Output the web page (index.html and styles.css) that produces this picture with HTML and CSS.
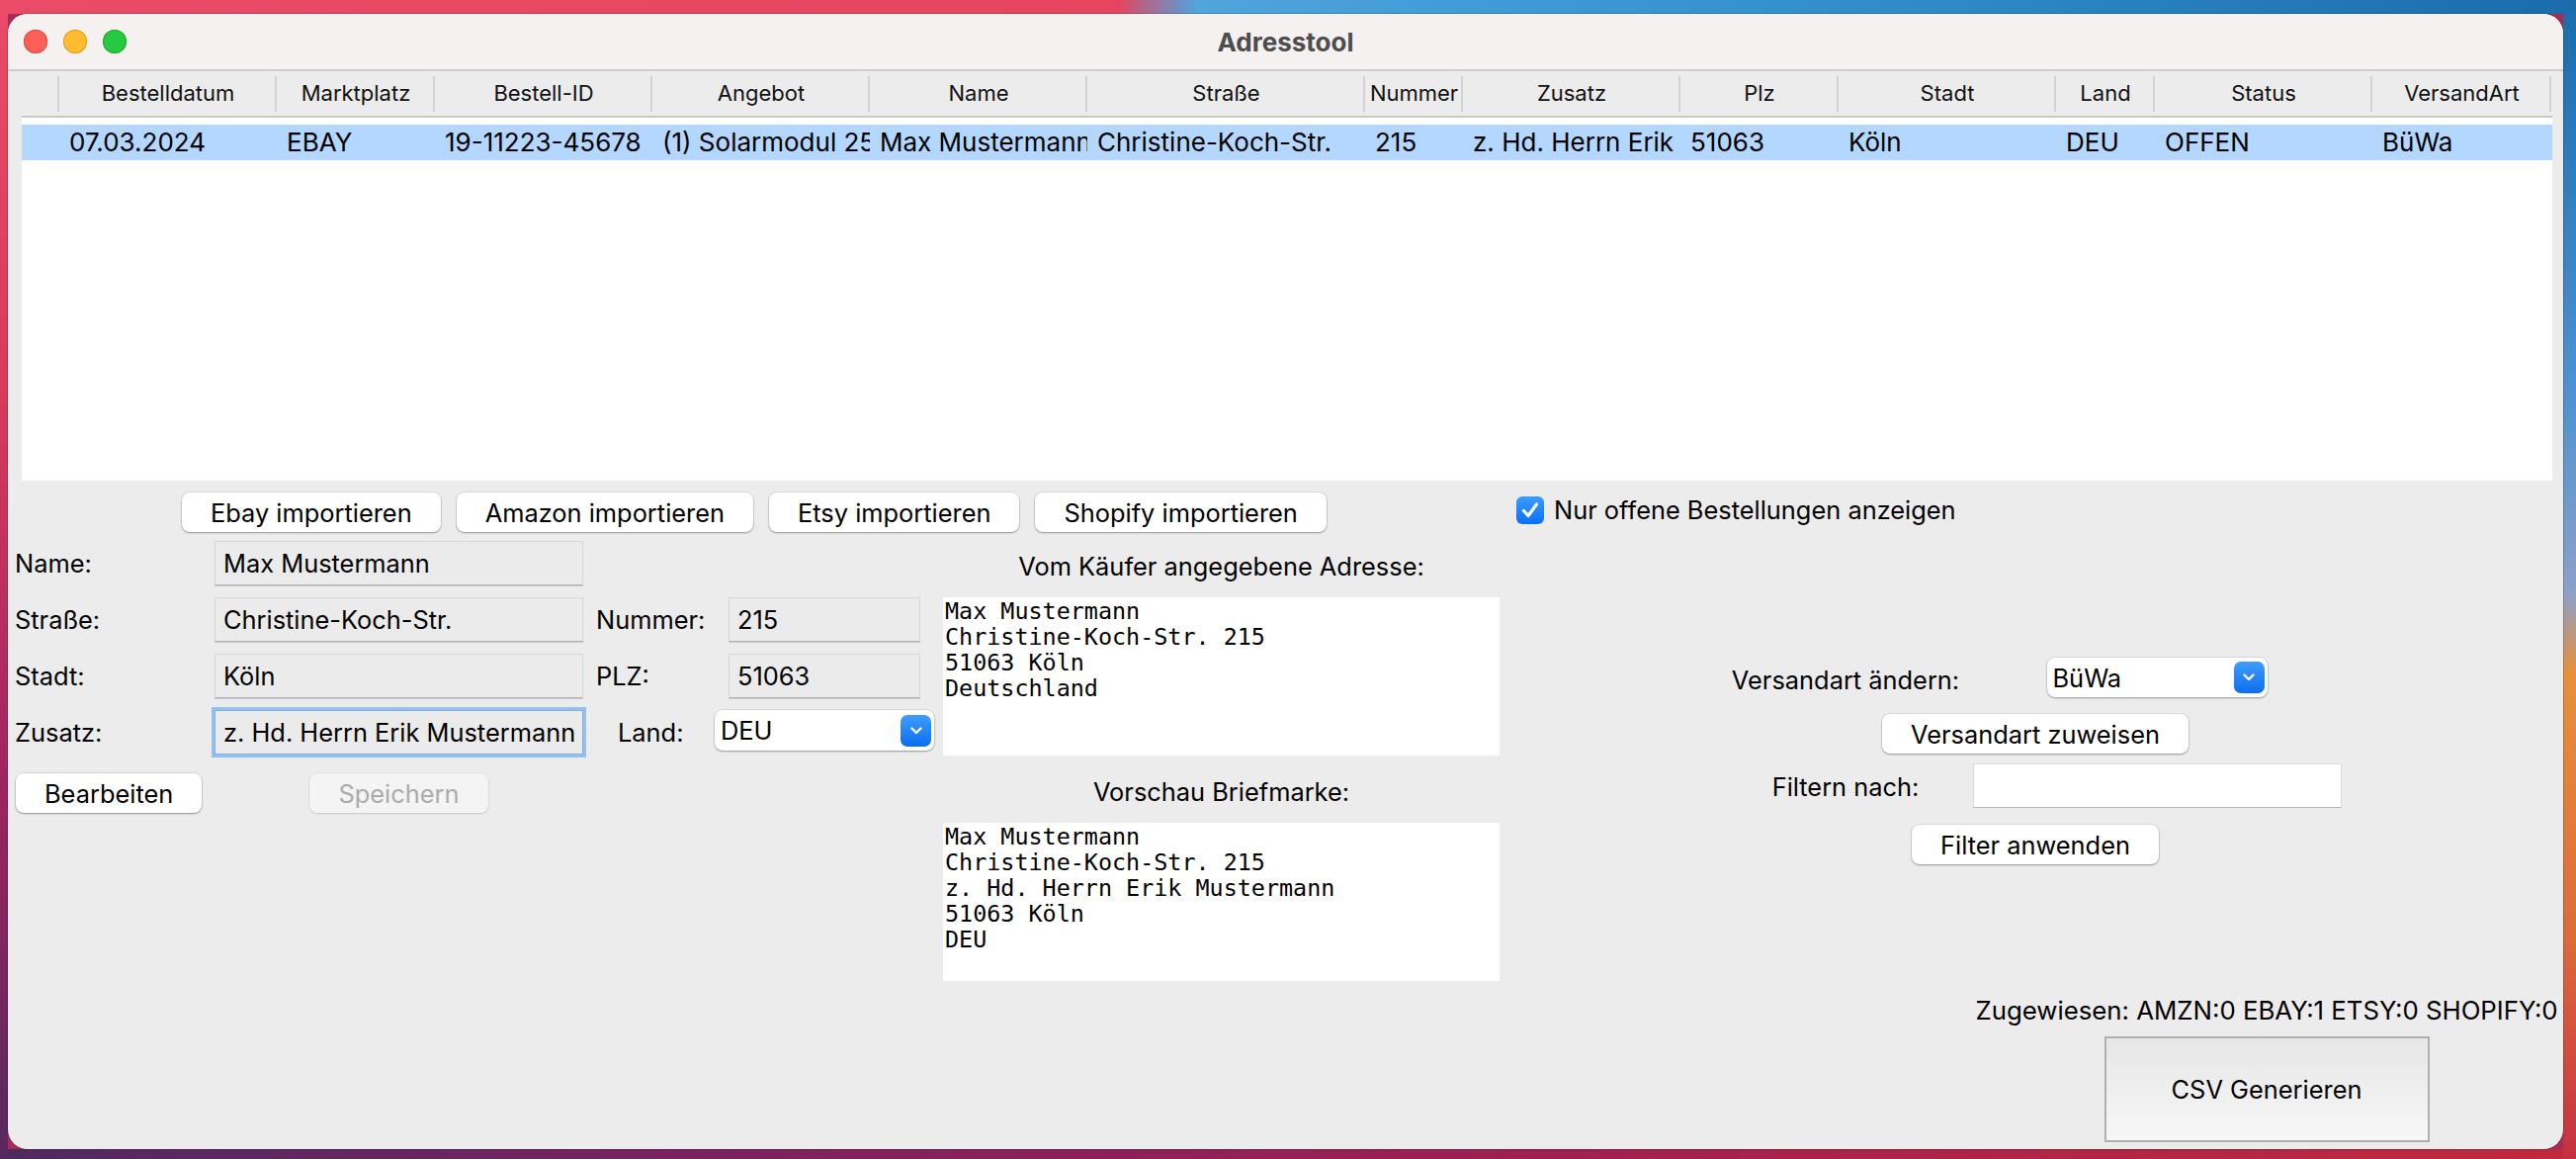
FILE: index.html
```html
<!DOCTYPE html>
<html lang="de">
<head>
<meta charset="utf-8">
<title>Adresstool</title>
<link rel="stylesheet" href="styles.css">
</head>
<body>
<div class="desktop">
  <div class="window">
    <div class="titlebar">
      <div class="lights">
        <span class="light red"></span><span class="light yellow"></span><span class="light green"></span>
      </div>
      <div class="title">Adresstool</div>
      <div></div>
    </div>

    <div class="table">
      <div class="thead">
        <div class="th"></div>
        <div class="th">Bestelldatum</div>
        <div class="th">Marktplatz</div>
        <div class="th">Bestell-ID</div>
        <div class="th">Angebot</div>
        <div class="th">Name</div>
        <div class="th">Straße</div>
        <div class="th">Nummer</div>
        <div class="th">Zusatz</div>
        <div class="th">Plz</div>
        <div class="th">Stadt</div>
        <div class="th">Land</div>
        <div class="th">Status</div>
        <div class="th">VersandArt</div>
      </div>
      <div class="tbody">
        <div class="tr selected">
          <div class="td"></div>
          <div class="td">07.03.2024</div>
          <div class="td">EBAY</div>
          <div class="td">19-11223-45678</div>
          <div class="td">(1) Solarmodul 250W Monokristallin</div>
          <div class="td">Max Mustermann</div>
          <div class="td">Christine-Koch-Str.</div>
          <div class="td">215</div>
          <div class="td">z. Hd. Herrn Erik Mustermann</div>
          <div class="td">51063</div>
          <div class="td">Köln</div>
          <div class="td">DEU</div>
          <div class="td">OFFEN</div>
          <div class="td">BüWa</div>
        </div>
      </div>
    </div>

    <div class="controls">
      <div class="import-row">
        <button class="btn">Ebay importieren</button>
        <button class="btn">Amazon importieren</button>
        <button class="btn">Etsy importieren</button>
        <button class="btn">Shopify importieren</button>
      </div>
      <div class="check-row">
        <svg class="checkbox" width="28" height="28" viewBox="0 0 28 28">
          <defs>
            <linearGradient id="cbg" x1="0" y1="0" x2="0" y2="1">
              <stop offset="0" stop-color="#3c9cff"/>
              <stop offset="1" stop-color="#0b6ff3"/>
            </linearGradient>
          </defs>
          <rect x="0" y="0" width="28" height="28" rx="6" fill="url(#cbg)"/>
          <path d="M7.5 14.5 L12 19.5 L20.5 8" fill="none" stroke="#fff" stroke-width="3.2" stroke-linecap="round" stroke-linejoin="round"/>
        </svg>
        <span>Nur offene Bestellungen anzeigen</span>
      </div>

      <div class="form-panel">
        <div class="lbl">Name:</div>
        <div class="field">Max Mustermann</div>
        <div></div><div></div>

        <div class="lbl">Straße:</div>
        <div class="field">Christine-Koch-Str.</div>
        <div class="lbl lbl-mid">Nummer:</div>
        <div class="field field-short">215</div>

        <div class="lbl">Stadt:</div>
        <div class="field">Köln</div>
        <div class="lbl lbl-mid">PLZ:</div>
        <div class="field field-short">51063</div>

        <div class="lbl">Zusatz:</div>
        <div class="field field-focus">z. Hd. Herrn Erik Mustermann</div>
        <div class="lbl lbl-land">Land:</div>
        <div class="combo combo-land">
          <span>DEU</span>
          <span class="combo-arrow"><svg width="14" height="10" viewBox="0 0 14 10"><polyline points="2.5,2.5 7,7 11.5,2.5" fill="none" stroke="#fff" stroke-width="2.4" stroke-linecap="round" stroke-linejoin="round"/></svg></span>
        </div>

        <button class="btn btn-edit">Bearbeiten</button>
        <button class="btn btn-save" disabled>Speichern</button>
      </div>

      <div class="address-panel">
        <div class="caption caption-1">Vom Käufer angegebene Adresse:</div>
        <div class="mono mono-1">Max Mustermann
Christine-Koch-Str. 215
51063 Köln
Deutschland</div>
        <div class="caption caption-2">Vorschau Briefmarke:</div>
        <div class="mono mono-2">Max Mustermann
Christine-Koch-Str. 215
z. Hd. Herrn Erik Mustermann
51063 Köln
DEU</div>
      </div>

      <div class="ship-panel">
        <div class="ship-grid">
          <div class="ship-lbl ship-lbl-1">Versandart ändern:</div>
          <div class="combo combo-ship">
            <span>BüWa</span>
            <span class="combo-arrow"><svg width="14" height="10" viewBox="0 0 14 10"><polyline points="2.5,2.5 7,7 11.5,2.5" fill="none" stroke="#fff" stroke-width="2.4" stroke-linecap="round" stroke-linejoin="round"/></svg></span>
          </div>
          <button class="btn btn-span btn-assign">Versandart zuweisen</button>
          <div class="ship-lbl ship-lbl-2">Filtern nach:</div>
          <div class="filter-field"></div>
          <button class="btn btn-span btn-filter">Filter anwenden</button>
        </div>
        <div class="assign">
          <div class="assign-text">Zugewiesen: AMZN:0 EBAY:1 ETSY:0 SHOPIFY:0</div>
          <button class="csv-btn">CSV Generieren</button>
        </div>
      </div>
    </div>
  </div>
</div>
</body>
</html>
```

FILE: styles.css
```css
* { box-sizing: border-box; }

html, body {
  margin: 0;
  padding: 0;
}

body {
  width: 2606px;
  height: 1172px;
  overflow: hidden;
  font-family: "Inter", "Liberation Sans", sans-serif;
  font-size: 25.4px;
  color: #000;
  background-color: #a82a58;
  background-image:
    linear-gradient(to right, #ec4b67 0, #e6445f 1130px, #4fa5dc 1210px, #3590cf 1800px, #1a6cab 2606px),
    linear-gradient(to bottom, #1a6cab 0, #4e93cf 400px, #8da0c8 600px, #e6913c 680px, #dd6a3a 950px, #c53040 1172px),
    linear-gradient(to bottom, #ec4b67 0, #d93a5c 400px, #9c2461 800px, #55295f 1172px),
    linear-gradient(to right, #4f2a5e 0, #7a2261 700px, #9e1f52 1500px, #c22a3c 2606px);
  background-size: 100% 14px, 13px 100%, 8px 100%, 100% 10px;
  background-position: top left, top right, top left, bottom left;
  background-repeat: no-repeat;
}

.desktop {
  padding: 14px 13px 10px 8px;
}

.window {
  width: 2585px;
  height: 1148px;
  border-radius: 20px;
  background: #ececec;
  overflow: hidden;
  display: flex;
  flex-direction: column;
  box-shadow: 0 0 0 1px rgba(0, 0, 0, 0.22);
}

/* Title bar */
.titlebar {
  flex: none;
  height: 58px;
  background: #f6f1f1;
  border-bottom: 2px solid #cecccc;
  display: grid;
  grid-template-columns: 1fr auto 1fr;
  align-items: center;
}

.lights {
  display: flex;
  gap: 16px;
  padding-left: 16px;
}

.light {
  width: 24px;
  height: 24px;
  border-radius: 50%;
}

.red { background: #fe5f57; box-shadow: inset 0 0 0 1px #e2463f; }
.yellow { background: #febc2e; box-shadow: inset 0 0 0 1px #dfa023; }
.green { background: #28c840; box-shadow: inset 0 0 0 1px #1dac2c; }

.title {
  font-weight: 700;
  font-size: 26px;
  color: #4d4d4d;
}

/* Table */
.table {
  flex: none;
  margin: 0 11px 0 14px;
}

.thead,
.tr {
  display: grid;
  grid-template-columns: 38px 220px 160px 220px 220px 220px 281px 99px 220px 160px 220px 100px 220px 181px;
}

.thead {
  height: 47px;
  background: #ececec;
  border-bottom: 2px solid #c9c9c9;
}

.th {
  font-size: 22px;
  line-height: 45px;
  text-align: center;
  white-space: nowrap;
  overflow: hidden;
  color: #111;
  background: linear-gradient(#d2d2d2, #d2d2d2) right center / 2px 36px no-repeat;
}

.tbody {
  height: 367px;
  background: #fff;
  padding-top: 7px;
}

.tr {
  height: 36px;
}

.tr.selected {
  background: #b3d7ff;
}

.td {
  font-size: 26px;
  line-height: 36px;
  padding-left: 10px;
  white-space: nowrap;
  overflow: hidden;
}

/* Controls area */
.controls {
  flex: 1;
  display: grid;
  grid-template-columns: 940px 577px 1068px;
  grid-template-rows: 52px 1fr;
  align-items: start;
}

.btn {
  height: 40px;
  padding: 0 29px;
  border: none;
  border-radius: 8px;
  background: #fff;
  font-family: inherit;
  font-size: 25.4px;
  color: #000;
  white-space: nowrap;
  box-shadow: 0 0 0 1px rgba(0, 0, 0, 0.07), 0 1px 2px rgba(0, 0, 0, 0.32);
}

.import-row {
  grid-column: 1 / 3;
  display: flex;
  gap: 16px;
  padding: 12px 0 0 176px;
}

.check-row {
  grid-column: 3;
  display: flex;
  align-items: center;
  gap: 10px;
  padding: 14px 0 0 9px;
}

.checkbox {
  flex: none;
  display: block;
}

/* Left form */
.form-panel {
  grid-column: 1;
  grid-row: 2;
  margin-top: 9px;
  display: grid;
  grid-template-columns: 209px 373px 133px 222px;
  grid-auto-rows: 45px;
  row-gap: 12px;
  align-items: center;
}

.lbl {
  padding-left: 7px;
  white-space: nowrap;
}

.lbl-mid { padding-left: 13px; }
.lbl-land { padding-left: 35px; }

.field {
  height: 45px;
  display: flex;
  align-items: center;
  padding-left: 8px;
  white-space: nowrap;
  overflow: hidden;
  background: #ebebeb;
  border: 1px solid #d6d6d6;
  border-bottom-color: #b3b3b3;
  box-shadow: 0 1px 0 #c9c9c9;
}

.field-short {
  width: 194px;
  margin-left: 14px;
}

.field-focus {
  border: 1px solid #7fb1ea;
  box-shadow: 0 0 0 3px #93c0f1;
}

.combo {
  height: 41px;
  display: flex;
  align-items: center;
  justify-content: space-between;
  padding: 0 3px 0 6px;
  border-radius: 8px;
  background: #fff;
  box-shadow: 0 0 0 1px rgba(0, 0, 0, 0.08), 0 1px 2px rgba(0, 0, 0, 0.3);
}

.combo-land {
  align-self: start;
}

.combo-arrow {
  width: 31px;
  height: 32px;
  border-radius: 7px;
  background: linear-gradient(#3f9dfe, #0c6ef2);
  display: flex;
  align-items: center;
  justify-content: center;
}

.btn-edit {
  align-self: start;
  justify-self: start;
  margin: 7px 0 0 8px;
}

.btn-save {
  align-self: start;
  justify-self: center;
  margin-top: 7px;
  background: #f4f4f4;
  color: #ababab;
  box-shadow: 0 0 0 1px rgba(0, 0, 0, 0.04), 0 1px 2px rgba(0, 0, 0, 0.12);
}

/* Middle: address previews */
.address-panel {
  grid-column: 2;
  grid-row: 2;
  display: flex;
  flex-direction: column;
  padding-left: 6px;
}

.caption {
  width: 563px;
  line-height: 32px;
  text-align: center;
}

.caption-1 { margin-top: 19px; }
.caption-2 { margin-top: 21px; }

.mono {
  width: 563px;
  height: 160px;
  margin-top: 15px;
  padding: 1px 2px;
  background: #fff;
  font-family: "DejaVu Sans Mono", monospace;
  font-size: 23.4px;
  line-height: 26px;
  white-space: pre;
}

/* Right: shipping */
.ship-panel {
  grid-column: 3;
  grid-row: 2;
  display: flex;
  flex-direction: column;
}

.ship-grid {
  margin: 127px 0 0 219px;
  display: grid;
  grid-template-columns: 246px 384px;
  grid-template-rows: 57px 50px 62px 40px;
  align-items: start;
}

.ship-lbl {
  justify-self: center;
  white-space: nowrap;
}

.ship-lbl-1 { line-height: 46px; }
.ship-lbl-2 { line-height: 48px; }

.combo-ship {
  width: 223px;
  height: 40px;
  justify-self: center;
}

.btn-span {
  grid-column: 1 / 3;
  justify-self: center;
}

.filter-field {
  width: 373px;
  height: 45px;
  justify-self: center;
  background: #fff;
  border: 1px solid #d9d9d9;
  border-bottom-color: #b5b5b5;
}

.assign {
  width: 600px;
  margin: 132px 0 0 468px;
  display: flex;
  flex-direction: column;
  align-items: center;
}

.assign-text {
  font-size: 25.8px;
  line-height: 32px;
  white-space: nowrap;
}

.csv-btn {
  width: 329px;
  height: 107px;
  margin-top: 10px;
  border: 2px solid #b0b0b0;
  border-radius: 0;
  background: linear-gradient(#e6e6e6, #f7f7f7);
  font-family: inherit;
  font-size: 25.4px;
  color: #000;
}
```
